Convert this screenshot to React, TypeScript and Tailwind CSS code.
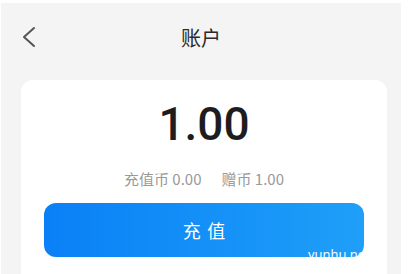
import React from 'react';

const cjk = { fontFamily: '"Noto Sans CJK SC", "Noto Sans", sans-serif' };

export default function App() {
  return (
    <div className="relative w-[408px] h-[274px] overflow-hidden bg-white pt-[3px] pl-[1px] pr-[7px]" style={cjk}>
      <div className="h-full bg-[#f4f4f5] flex flex-col">
        {/* Header */}
        <div className="relative h-[77px] flex items-start justify-center pt-[20px]">
          <svg className="absolute left-[21px] top-[23px]" width="14" height="22" viewBox="0 0 14 22" fill="none">
            <polyline points="12,2 2,11 12,20" stroke="#555" strokeWidth="2" strokeLinecap="round" strokeLinejoin="round" />
          </svg>
          <span className="text-[20px] leading-[30px] text-[#2a2a2a]">账户</span>
        </div>

        {/* Card */}
        <div className="ml-[20px] w-[366px] flex-1 bg-white rounded-t-[12px] flex flex-col items-center pt-[20px]">
          <div
            className="text-[46px] leading-[48px] font-medium text-[#1d1d1f]"
            style={{ fontFamily: 'Roboto, "Noto Sans", sans-serif' }}
          >
            1.00
          </div>
          <div className="mt-[21px] flex gap-[20px] text-[15px] leading-[20px] text-[#9a9a9a]">
            <span>充值币 0.00</span>
            <span>赠币 1.00</span>
          </div>
          <button className="mt-[14px] w-[320px] h-[54px] rounded-[12px] bg-gradient-to-r from-[#0a80f6] to-[#1f9ff8] text-white text-[18px] tracking-[0.35em] pl-[0.35em]">
            充值
          </button>
        </div>
      </div>
      <span className="absolute left-[308px] top-[246px] text-[13px] leading-[16px] text-white underline" style={{ fontFamily: '"Open Sans", sans-serif' }}>
        yunhu.net
      </span>
    </div>
  );
}
